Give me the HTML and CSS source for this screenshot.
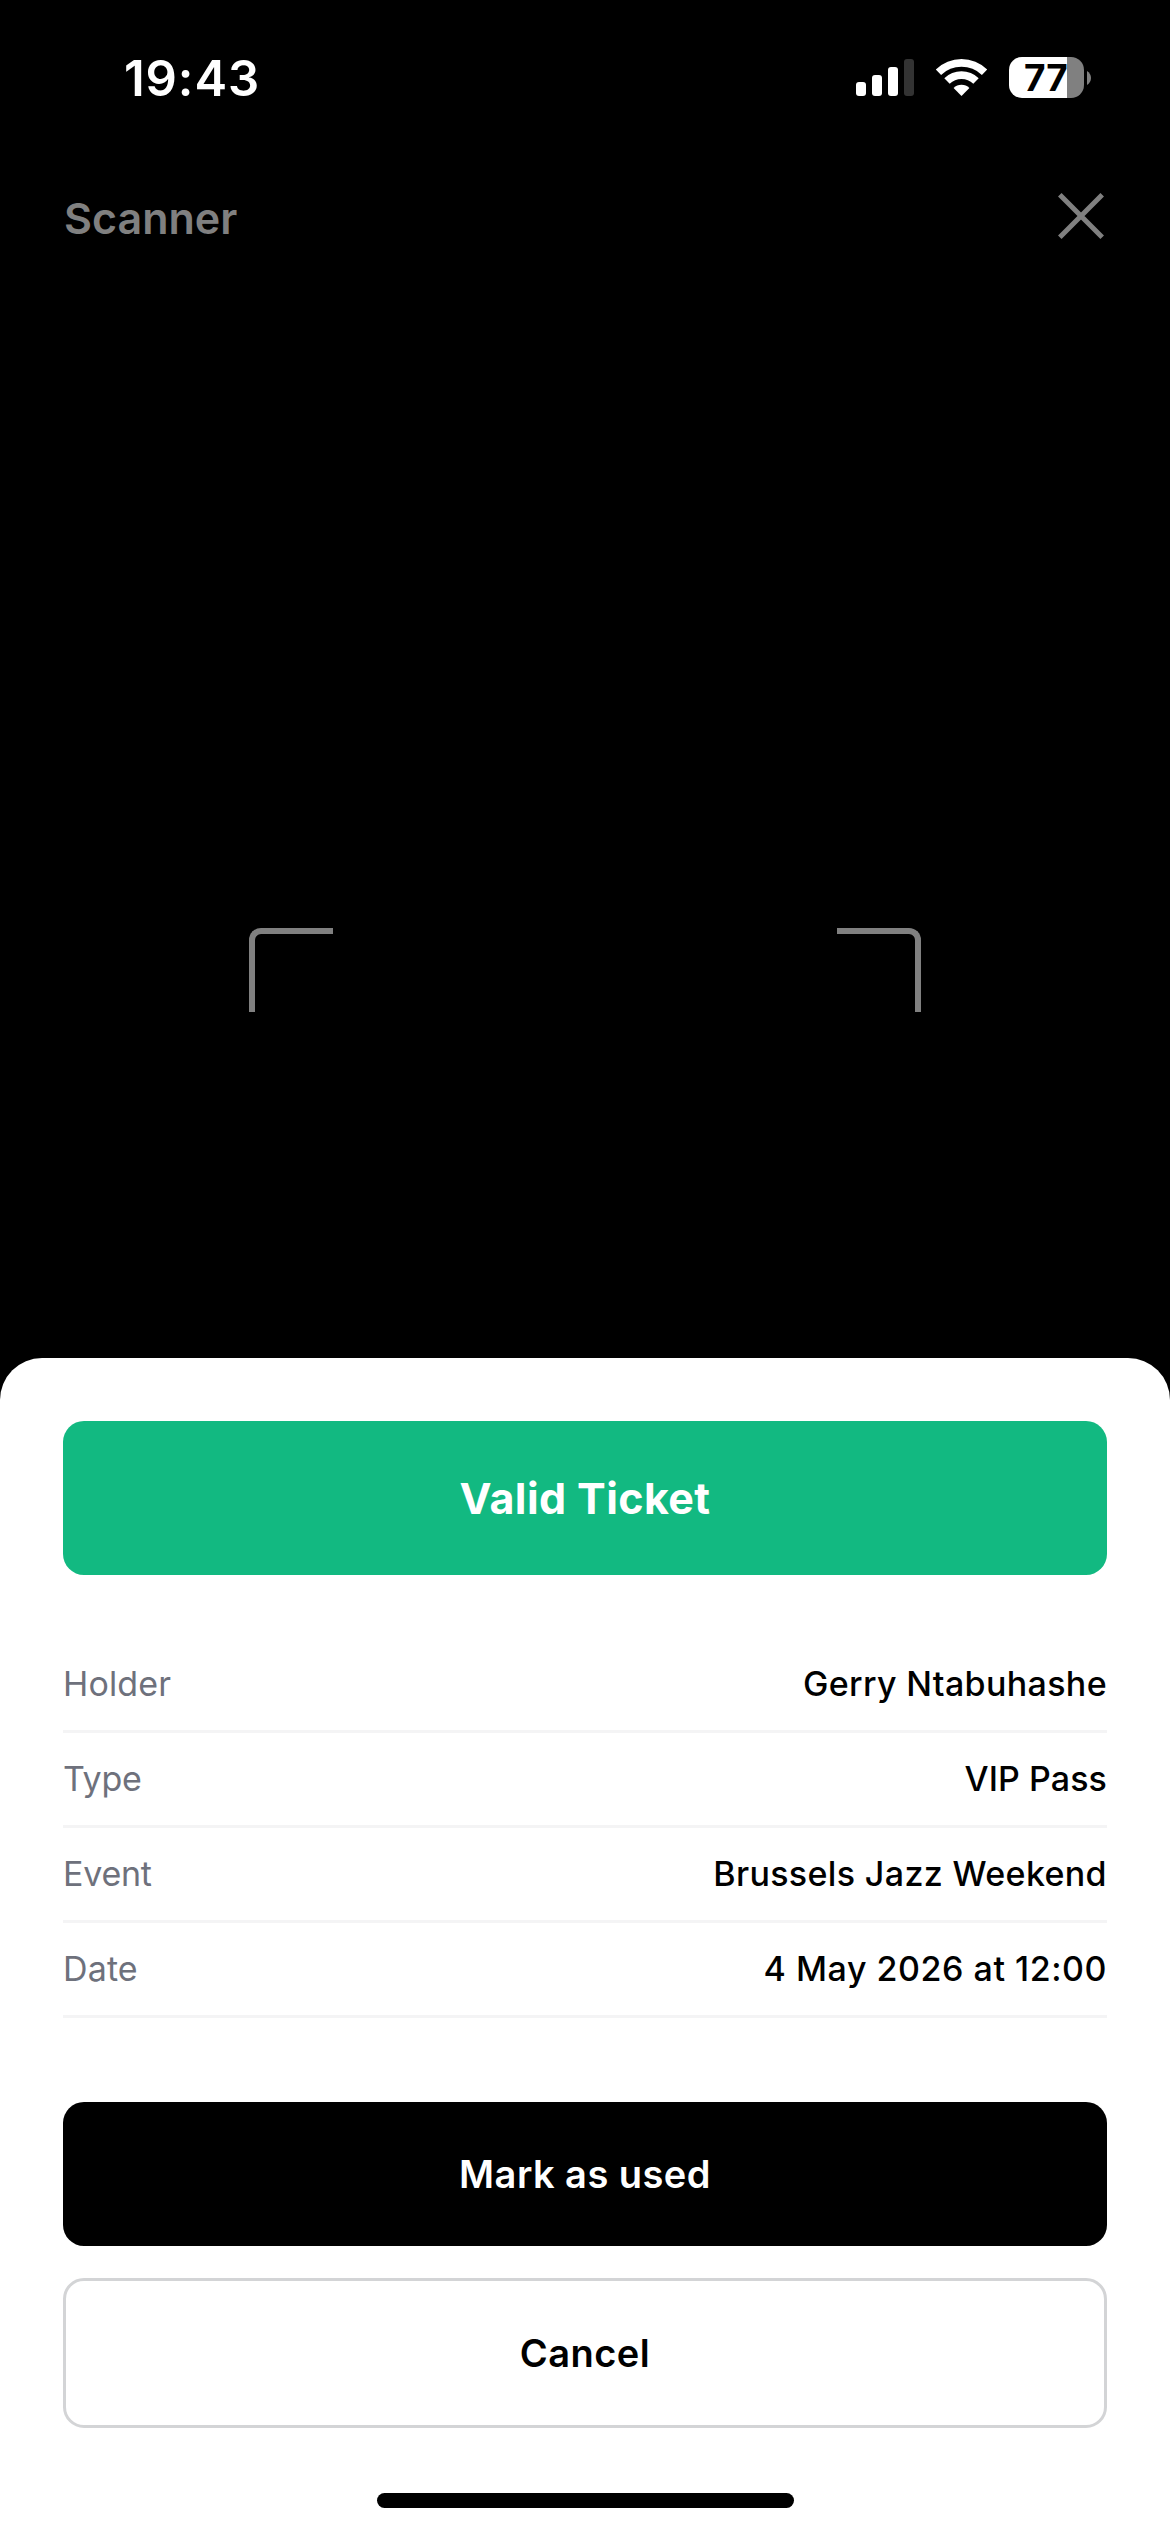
FILE: index.html
```html
<!DOCTYPE html>
<html lang="en">
<head>
<meta charset="utf-8">
<title>Scanner</title>
<link rel="stylesheet" href="styles.css">
</head>
<body>
<div class="screen">
  <div class="status-bar">
    <span class="time">19:43</span>
    <div class="status-icons">
      <svg class="signal" width="58" height="37" viewBox="0 0 58 37" fill="#fff">
        <rect x="0" y="23" width="10" height="14" rx="3"/>
        <rect x="16" y="16" width="10" height="21" rx="3"/>
        <rect x="32" y="8" width="10" height="29" rx="3"/>
        <rect x="48" y="0" width="10" height="37" rx="3" fill="#333"/>
      </svg>
      <svg class="wifi" width="53" height="37" viewBox="0 0 53 37" fill="#fff">
        <path d="M.8 10.4A37 37 0 0 1 52.2 10.4L46.9 15.9A29.3 29.3 0 0 0 6.1 15.9Z"/>
        <path d="M9.3 19.2A24.7 24.7 0 0 1 43.7 19.2L38.3 24.8A17 17 0 0 0 14.7 24.8Z"/>
        <path d="M18.6 28.9A11.3 11.3 0 0 1 34.4 28.9L26.5 37Z"/>
      </svg>
      <div class="battery">
        <div class="battery-body">77</div>
        <svg width="4" height="14" viewBox="0 0 4 14" fill="#808080"><path d="M0 0C2.4 1.6 4 4 4 7S2.4 12.4 0 14Z"/></svg>
      </div>
    </div>
  </div>

  <header class="header">
    <h1 class="title">Scanner</h1>
    <svg class="close" width="46" height="46" viewBox="0 0 46 46" stroke="#808080" stroke-width="5"><path d="M1.8 1.8L44.2 44.2M44.2 1.8L1.8 44.2"/></svg>
  </header>

  <main class="viewfinder">
    <div class="corner corner-left"></div>
    <div class="corner corner-right"></div>
  </main>

  <section class="sheet">
    <div class="banner">Valid Ticket</div>
    <dl class="details">
      <div class="row"><dt>Holder</dt><dd>Gerry Ntabuhashe</dd></div>
      <div class="row"><dt class="tight">Type</dt><dd class="short">VIP Pass</dd></div>
      <div class="row"><dt class="tight">Event</dt><dd>Brussels Jazz Weekend</dd></div>
      <div class="row"><dt>Date</dt><dd class="date">4 May 2026 at 12:00</dd></div>
    </dl>
    <div class="actions">
      <button class="button primary">Mark as used</button>
      <button class="button secondary">Cancel</button>
    </div>
    <div class="home-indicator"></div>
  </section>
</div>
</body>
</html>
```
FILE: styles.css
```css
* {
  box-sizing: border-box;
}

body {
  margin: 0;
  background: #000;
  font-family: Inter, "Liberation Sans", sans-serif;
}

.screen {
  display: flex;
  flex-direction: column;
  width: 1170px;
  height: 2532px;
  background: #000;
  overflow: hidden;
}

.status-bar {
  display: flex;
  justify-content: space-between;
  height: 156px;
  padding: 48px 79px 0 124px;
  color: #fff;
}

.time {
  padding-top: 1px;
  font-size: 49px;
  font-weight: 600;
  line-height: 60px;
  letter-spacing: 0.9px;
}

.status-icons {
  display: flex;
  align-items: flex-start;
  padding-top: 9px;
}

.signal,
.wifi {
  display: block;
  margin-top: 2px;
}

.wifi {
  margin-left: 21px;
}

.battery {
  display: flex;
  align-items: center;
  gap: 3px;
  margin-left: 21px;
}

.battery-body {
  width: 75px;
  height: 41px;
  padding-left: 15px;
  border-radius: 13px;
  background: linear-gradient(90deg, #fff 58px, #808080 58px);
  color: #000;
  font-size: 37px;
  font-weight: 700;
  line-height: 41px;
}

.header {
  display: flex;
  align-items: center;
  justify-content: space-between;
  height: 120px;
  padding: 0 66px 0 64px;
}

.title {
  margin: 0;
  color: #808080;
  font-size: 43px;
  font-weight: 600;
  line-height: 60px;
  padding-top: 3px;
}

.viewfinder {
  display: flex;
  justify-content: space-between;
  flex: 1;
  padding: 652px 249px 0;
}

.corner {
  width: 84px;
  height: 84px;
  border: 0 solid #808080;
  border-top-width: 6px;
}

.corner-left {
  border-left-width: 6px;
  border-top-left-radius: 12px;
}

.corner-right {
  border-right-width: 6px;
  border-top-right-radius: 12px;
}

.sheet {
  height: 1174px;
  padding: 63px 63px 0;
  border-radius: 42px 42px 0 0;
  background: #fff;
}

.banner {
  height: 154px;
  border-radius: 21px;
  background: #12b981;
  color: #fff;
  font-size: 43px;
  font-weight: 700;
  line-height: 154px;
  letter-spacing: 0.4px;
  text-align: center;
}

.details {
  margin: 63px 0 0;
}

.row {
  display: flex;
  justify-content: space-between;
  height: 95px;
  border-bottom: 3px solid #f4f4f5;
  font-size: 34px;
  line-height: 91px;
}

dt {
  color: #6e717c;
  letter-spacing: 0.15px;
}

.tight {
  letter-spacing: -0.25px;
}

dd {
  margin: 0;
  color: #000;
  font-weight: 500;
  letter-spacing: 0.35px;
}

.short {
  letter-spacing: 0.07px;
}

.date {
  letter-spacing: 0.53px;
}

.actions {
  display: flex;
  flex-direction: column;
  gap: 32px;
  margin-top: 84px;
}

.button {
  height: 144px;
  padding: 0;
  border: 0;
  border-radius: 21px;
  font-family: inherit;
  font-size: 38px;
  font-weight: 600;
  letter-spacing: 0.45px;
}

.primary {
  background: #000;
  color: #fff;
}

.secondary {
  height: 150px;
  border: 3px solid #d3d4d6;
  background: #fff;
  color: #000;
}

.home-indicator {
  width: 417px;
  height: 15px;
  margin: 65px auto 0;
  border-radius: 8px;
  background: #000;
}
```
